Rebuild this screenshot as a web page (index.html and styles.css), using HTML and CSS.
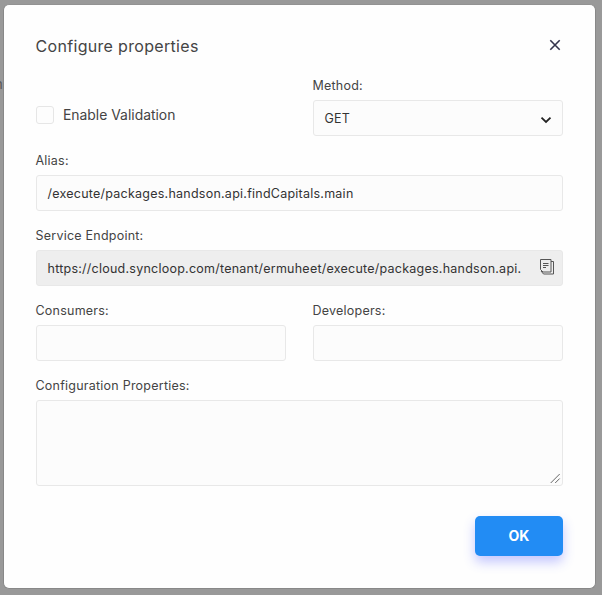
FILE: index.html
```html
<!DOCTYPE html>
<html lang="en">
<head>
<meta charset="utf-8">
<title>Configure properties</title>
<link rel="stylesheet" href="styles.css">
</head>
<body>
<span class="page-text">n</span>
<main class="modal">
  <header class="modal-header">
    <h1 class="title">Configure properties</h1>
    <button class="close" aria-label="Close">
      <svg width="12" height="12" viewBox="0 0 12 12"><path d="M1.3 1.3l9.4 9.4M10.7 1.3L1.3 10.7" fill="none" stroke="#34344c" stroke-width="1.6"/></svg>
    </button>
  </header>
  <form class="form">
    <div class="row">
      <label class="check"><input class="box" type="checkbox"><span class="check-text">Enable Validation</span></label>
      <div class="field">
        <span class="label">Method:</span>
        <div class="control select"><span class="value">GET</span>
          <svg class="chevron" width="12" height="8" viewBox="0 0 12 8"><path d="M1.5 1.700L6 6l4.500-4.300" fill="none" stroke="#222" stroke-width="1.8"/></svg>
        </div>
      </div>
    </div>
    <div class="field">
      <span class="label">Alias:</span>
      <div class="control"><span class="value path">/execute/packages.handson.api.findCapitals.main</span></div>
    </div>
    <div class="field">
      <span class="label">Service Endpoint:</span>
      <div class="control readonly"><span class="value url">https://cloud.syncloop.com/tenant/ermuheet/execute/packages.handson.api.</span>
        <svg class="copy" width="14" height="16" viewBox="0 0 14 16"><path d="M.5.5h10.500v12.500H3L.5 10.500zM11 2.500h2.500v12.500H3.500L1 12M3 4.500h5.500M3 6.500h5.500M3 8.500h3" fill="none" stroke="#555" stroke-width="1"/></svg>
      </div>
    </div>
    <div class="row">
      <div class="field"><span class="label">Consumers:</span><div class="control"></div></div>
      <div class="field"><span class="label">Developers:</span><div class="control"></div></div>
    </div>
    <div class="field">
      <span class="label">Configuration Properties:</span>
      <div class="control area">
        <svg class="grip" width="11" height="11" viewBox="0 0 11 11"><path d="M.7 10L9.700 1M5.200 10l4.500-4.500" fill="none" stroke="#666" stroke-width="1"/></svg>
      </div>
    </div>
  </form>
  <footer class="modal-footer"><button class="ok">OK</button></footer>
</main>
</body>
</html>
```
FILE: styles.css
```css
* { box-sizing: border-box; }
body {
  margin: 0;
  width: 602px;
  height: 595px;
  overflow: hidden;
  padding: 4px 6px 6px 3px;
  background: #999;
  font-family: Inter, "Liberation Sans", sans-serif;
  color: #444;
  position: relative;
}
.page-text {
  position: absolute;
  left: -5px;
  top: 76px;
  font-size: 13px;
  line-height: 16px;
  color: #555;
}
.modal {
  position: relative;
  height: 585px;
  width: 593px;
  padding: 29px 32px 32px 32px;
  background: #fefefe;
  border: 1px solid #888;
  border-top-color: #929292;
  border-radius: 6px;
}
.modal-header {
  display: flex;
  justify-content: space-between;
  height: 42px;
}
.title {
  margin: 0 0 0 -.5px;
  font-size: 16px;
  font-weight: 400;
  line-height: 24px;
  letter-spacing: .32px;
}
.close {
  width: 16px;
  height: 22px;
  padding: 0;
  border: 0;
  background: none;
  display: flex;
  align-items: center;
  justify-content: center;
}
.form {
  display: flex;
  flex-direction: column;
  gap: 15px;
}
.row {
  display: grid;
  grid-template-columns: 250px 250px;
  justify-content: space-between;
}
.field {
  display: flex;
  flex-direction: column;
}
.label {
  height: 24px;
  margin-left: -.5px;
  font-size: 12.5px;
  line-height: 20px;
  letter-spacing: .23px;
}
.control {
  display: flex;
  align-items: center;
  justify-content: space-between;
  height: 36px;
  padding: 0 11px;
  border: 1px solid #e8e8e8;
  border-radius: 3px;
  background: #fcfcfc;
}
.select { padding-right: 10px; }
.readonly { background: #eee; padding-right: 8px; }
.value {
  margin: 2px 0 0 -.5px;
  font-size: 12.5px;
  line-height: 18px;
  letter-spacing: .24px;
  color: #333;
  white-space: nowrap;
}
.copy { margin-bottom: 2px; }
.chevron { margin-top: 3px; }
.area {
  height: 86px;
  padding: 0 1px 1px;
  align-items: flex-end;
  justify-content: flex-end;
}
.check {
  display: flex;
  align-items: center;
  gap: 9px;
  height: 18px;
  margin-top: 30px;
}
.box {
  appearance: none;
  width: 18px;
  height: 18px;
  margin: 0;
  border: 1px solid #e6e6e6;
  border-radius: 3px;
  background: #fdfdfd;
}
.check-text {
  font-size: 13.9px;
  line-height: 18px;
}
.modal-footer {
  display: flex;
  justify-content: flex-end;
  margin-top: 30px;
}
.ok {
  width: 88px;
  height: 40px;
  padding: 0;
  border: 0;
  border-radius: 5px;
  background: #228cf4;
  box-shadow: 0 6px 12px rgba(70, 80, 255, .32);
  color: #fff;
  font: 700 14px/20px Inter, sans-serif;
}
```
